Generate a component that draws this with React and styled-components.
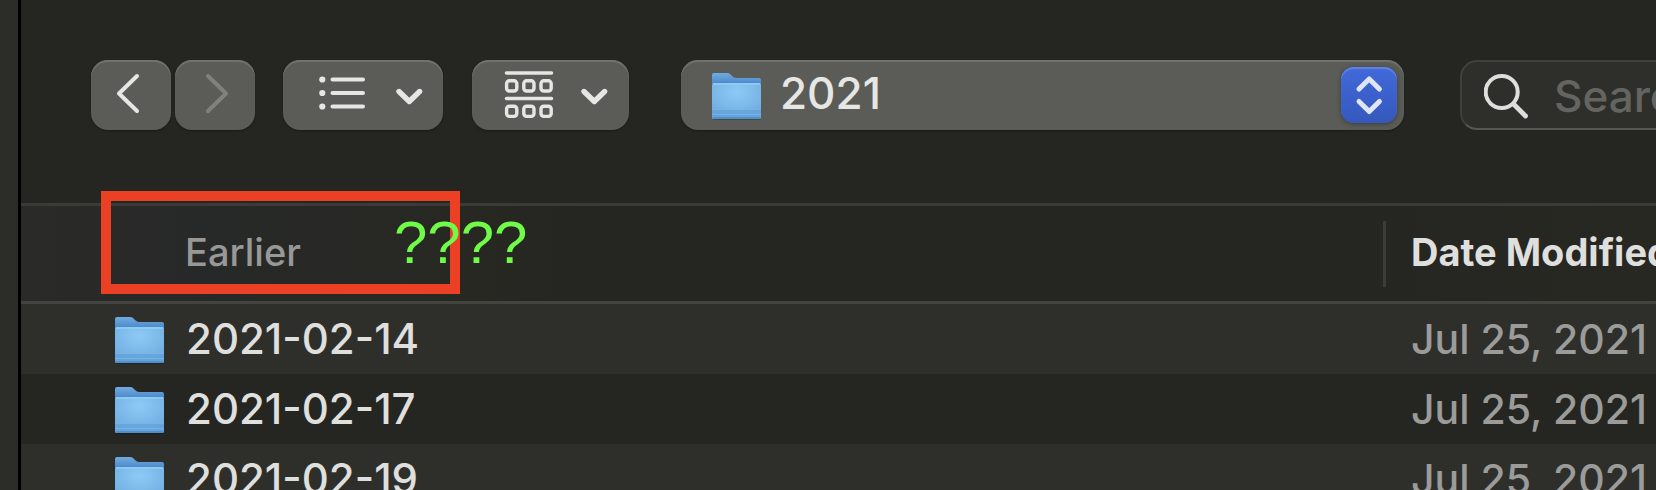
import React from "react";
import styled, { createGlobalStyle } from "styled-components";

const FILES = [
	{ name: "2021-02-14", modified: "Jul 25, 2021" },
	{ name: "2021-02-17", modified: "Jul 25, 2021" },
	{ name: "2021-02-19", modified: "Jul 25, 2021" }
];

const GlobalStyle = createGlobalStyle`
	* {
		box-sizing: border-box;
	}
	body {
		margin: 0;
		background: #252621;
		color: #dfdfdd;
		font-family: Inter, "Liberation Sans", sans-serif;
	}
`;

const Screen = styled.div`
	display: flex;
	height: 100vh;
	overflow: hidden;
`;

const Backdrop = styled.div`
	flex: none;
	width: 21px;
	background: #2c2d29;
	border-right: 3px solid #000;
`;

const Dialog = styled.main`
	flex: 1;
	min-width: 0;
	background: #252621;
`;

const Toolbar = styled.div`
	display: flex;
	padding: 60px 0 73px 70px;
	border-bottom: 3px solid #3a3b37;
`;

const ToolButton = styled.button`
	flex: none;
	width: ${props => props.$width}px;
	height: 70px;
	margin: 0 ${props => props.$gap}px 0 0;
	padding: 0;
	border: 0;
	border-radius: 17px;
	background: #5b5c57;
	box-shadow: inset 0 2px 1px #72736f, 0 1px 2px #1a1b17;
	color: ${props => (props.disabled ? "#80817d" : "#e6e6e4")};

	svg {
		display: block;
	}
`;

const PathPicker = styled.div`
	flex: 1;
	min-width: 0;
	display: flex;
	align-items: center;
	height: 70px;
	margin-right: 56px;
	padding: 0 7px 0 31px;
	border-radius: 17px;
	background: #5b5c57;
	box-shadow: inset 0 2px 1px #72736f, 0 1px 2px #1a1b17;
`;

const PathSelect = styled.select`
	flex: 1;
	min-width: 0;
	height: 70px;
	margin: 0;
	padding: 0 0 5px 18px;
	border: 0;
	appearance: none;
	background: transparent;
	color: #e6e6e4;
	font: 500 44px Inter, "Liberation Sans", sans-serif;
`;

const Stepper = styled.span`
	flex: none;
	width: 56px;
	height: 56px;
	border-radius: 13px;
	background: linear-gradient(#4169da, #3658bd);
	box-shadow: inset 0 2px 1px #5f84e6, 0 1px 4px #3a3b37;
	pointer-events: none;
`;

const SearchBox = styled.label`
	flex: none;
	display: flex;
	width: 196px;
	height: 70px;
	padding-left: 22px;
	border: 2px solid #3f403c;
	border-bottom-color: #565753;
	border-right: 0;
	border-radius: 17px 0 0 17px;
	background: #2e2f2b;
	color: #dededc;
`;

const SearchInput = styled.input`
	flex: 1;
	min-width: 0;
	margin: 0;
	padding: 2px 0 0 20px;
	border: 0;
	background: transparent;
	color: #dededc;
	font: 500 44px Inter, "Liberation Sans", sans-serif;

	&::placeholder {
		color: #646561;
		opacity: 1;
	}
`;

const Listing = styled.section`
	position: relative;
`;

const FileTable = styled.table`
	width: 100%;
	table-layout: fixed;
	border-collapse: separate;
	border-spacing: 0;
	text-align: left;
	white-space: nowrap;
`;

const HeadRow = styled.tr`
	height: 98px;
	background: linear-gradient(
		90deg,
		#2a2a28,
		#272928 12%,
		#282823 26%,
		#252621 36%,
		#252621 78%,
		#282823
	);
`;

const HeadCell = styled.th`
	padding: 0;
	overflow: hidden;
	border-bottom: 3px solid #434440;
	font-size: 38px;

	span {
		display: block;
		padding-bottom: 4px;
		line-height: 62px;
	}
`;

const GroupHead = styled(HeadCell)`
	padding-left: 164px;
	color: #989896;
	font-weight: 500;
`;

const DateHead = styled(HeadCell)`
	width: 273px;
	font-weight: 700;

	span {
		padding-left: 25px;
		border-left: 3px solid #3c3d39;
	}
`;

const FileRow = styled.tr`
	height: 70px;

	&:nth-child(odd) {
		background: #2e2f2b;
	}
`;

const FileCell = styled.td`
	padding: 0;
	overflow: hidden;
	font-weight: 500;
	font-size: 42px;
	line-height: 70px;
`;

const FileName = styled.div`
	display: flex;
	align-items: center;
	gap: 21px;
	padding-left: 94px;
`;

const FileDate = styled.div`
	padding-left: 28px;
	color: #9b9b99;
	font-size: 41px;
`;

const Highlight = styled.div`
	position: absolute;
	top: -15px;
	left: 80px;
	width: 359px;
	height: 103px;
	border: 10px solid #ec4025;
`;

const Question = styled.span`
	position: absolute;
	top: 1px;
	left: 373px;
	color: #6ffb48;
	font-family: "Liberation Sans", sans-serif;
	font-size: 60px;
	line-height: 72px;
`;

const Folder = () => (
	<svg width="50" height="50" viewBox="0 -1 50 50" aria-hidden="true">
		<defs>
			<linearGradient id="folder-back" x1="0" y1="0" x2="0" y2="1">
				<stop offset="0" stopColor="#71addf" />
				<stop offset="0.24" stopColor="#4b86cb" />
				<stop offset="1" stopColor="#4b86cb" />
			</linearGradient>
			<radialGradient id="folder-front" cx="0.5" cy="0.25" r="0.8">
				<stop offset="0" stopColor="#8dcaf6" />
				<stop offset="1" stopColor="#6caade" />
			</radialGradient>
		</defs>
		<rect x="1" y="42" width="48" height="7" rx="2" fill="#000" opacity="0.22" />
		<path
			d="M0 4Q0 2 2 2H15Q17 2 18 3L20 5Q22 7 24 7H47Q49 7 49 9V46Q49 48 47 48H2Q0 48 0 46Z"
			fill="url(#folder-back)"
		/>
		<path
			d="M0 14Q0 12 2 12H47Q49 12 49 14V46Q49 48 47 48H2Q0 48 0 46Z"
			fill="url(#folder-front)"
		/>
		<path d="M1 13H48" stroke="#92d2f5" strokeWidth="2" opacity="0.7" />
		<path d="M0 38H49V46Q49 48 47 48H2Q0 48 0 46Z" fill="#5f9fd8" opacity="0.6" />
		<path d="M0 38.5H49M0 43.5H49" stroke="#82bdec" opacity="0.6" />
		<path d="M1 47H48" stroke="#4f8fcb" strokeWidth="2" />
	</svg>
);

const Icon = ({ width, height = 70, children }) => (
	<svg
		width={width}
		height={height}
		viewBox={`0 0 ${width} ${height}`}
		fill="none"
		stroke="currentColor"
		strokeWidth="4"
		strokeLinecap="round"
		strokeLinejoin="round"
		aria-hidden="true"
	>
		{children}
	</svg>
);

export default () => (
	<Screen>
		<GlobalStyle />
		<Backdrop />
		<Dialog>
			<Toolbar>
				<ToolButton $width={80} $gap={4} aria-label="Back">
					<Icon width={80}>
						<path d="M46 16L28 33.5L46 51" />
					</Icon>
				</ToolButton>
				<ToolButton $width={80} $gap={28} aria-label="Forward" disabled>
					<Icon width={80}>
						<path d="M33 16L51 33.5L33 51" />
					</Icon>
				</ToolButton>
				<ToolButton $width={160} $gap={29} aria-label="List view">
					<Icon width={160}>
						<path d="M49.5 19.5H80M49.5 33H80M49.5 46.5H80" />
						<g fill="currentColor" stroke="none">
							<circle cx="39.3" cy="19.5" r="3.1" />
							<circle cx="39.3" cy="33" r="3.1" />
							<circle cx="39.3" cy="46.5" r="3.1" />
						</g>
						<path d="M116 31.5L126.3 41.5L136.6 31.5" strokeWidth="5.4" />
					</Icon>
				</ToolButton>
				<ToolButton $width={157} $gap={52} aria-label="Group items">
					<Icon width={157}>
						<path d="M34.5 13H79.5M34.5 38.5H79.5" strokeWidth="3.6" />
						<g strokeWidth="3.4">
							{[20.8, 46.2].map(y =>
								[34.6, 51.8, 69].map(x => (
									<rect key={`${x}-${y}`} x={x} y={y} width="10.2" height="10.2" rx="2.8" />
								))
							)}
						</g>
						<path d="M112 31.5L122.3 41.5L132.6 31.5" strokeWidth="5.4" />
					</Icon>
				</ToolButton>
				<PathPicker>
					<Folder />
					<PathSelect aria-label="Folder" defaultValue="2021">
						<option>2021</option>
					</PathSelect>
					<Stepper>
						<Icon width={56} height={56}>
							<g stroke="#dfe6f8" strokeWidth="5">
								<path d="M18 22L28.2 12L38.4 22" />
								<path d="M18 34.5L28.2 44.5L38.4 34.5" />
							</g>
						</Icon>
					</Stepper>
				</PathPicker>
				<SearchBox>
					<Icon width={50} height={66}>
						<circle cx="17.7" cy="30" r="16" />
						<path d="M30 42.5L41.5 54" strokeWidth="4.8" />
					</Icon>
					<SearchInput type="text" placeholder="Search" aria-label="Search" />
				</SearchBox>
			</Toolbar>
			<Listing>
				<FileTable>
					<thead>
						<HeadRow>
							<GroupHead>
								<span>Earlier</span>
							</GroupHead>
							<DateHead>
								<span>Date Modified</span>
							</DateHead>
						</HeadRow>
					</thead>
					<tbody>
						{FILES.map(file => (
							<FileRow key={file.name}>
								<FileCell>
									<FileName>
										<Folder />
										{file.name}
									</FileName>
								</FileCell>
								<FileCell>
									<FileDate>{file.modified}</FileDate>
								</FileCell>
							</FileRow>
						))}
					</tbody>
				</FileTable>
				<Highlight />
				<Question>????</Question>
			</Listing>
		</Dialog>
	</Screen>
);
